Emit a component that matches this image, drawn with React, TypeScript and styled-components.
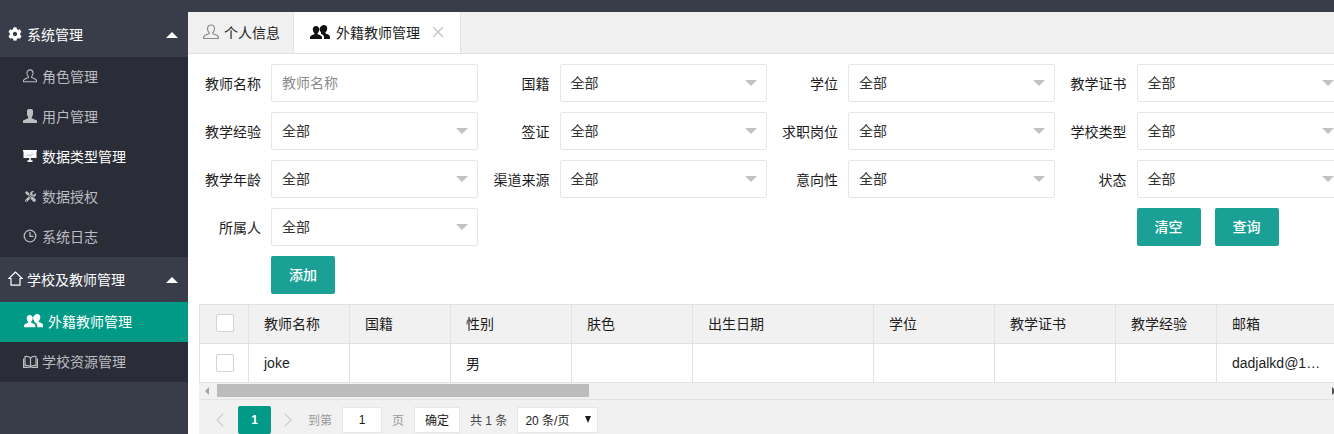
import React from "react";
import styled, { createGlobalStyle } from "styled-components";
import { FaCog, FaTools } from "react-icons/fa";
import { FiChevronLeft, FiChevronRight, FiX } from "react-icons/fi";

const GlobalStyle = createGlobalStyle`
  html, body {
    margin: 0;
    height: 100%;
    overflow: hidden;
    background: #fff;
  }
  body {
    font-family: "Liberation Sans", "Noto Sans CJK SC", sans-serif;
    font-size: 14px;
    color: #1c1c1c;
  }
`;

const Page = styled.div`
  display: flex;
  flex-direction: column;
  width: 1334px;
  height: 434px;
  overflow: hidden;
`;

const TopBar = styled.div`
  flex: 0 0 12px;
  background: #393d49;
`;

const Body = styled.div`
  display: flex;
  flex: 1;
  min-height: 0;
`;

const Sidebar = styled.nav`
  flex: 0 0 188px;
  background: #393d49;
`;

const GroupHead = styled.div`
  box-sizing: border-box;
  display: flex;
  align-items: center;
  height: 45px;
  padding: 0 10px 2px 8px;
  color: #fff;
`;

const GroupIcon = styled.span`
  display: flex;
  flex: 0 0 19px;
`;

const GroupTitle = styled.span`
  flex: 1;
`;

const Caret = styled.i`
  width: 0;
  height: 0;
  margin-top: 2px;
  border-left: 6px solid transparent;
  border-right: 6px solid transparent;
  border-bottom: 6px solid #fff;
`;

const SubList = styled.div`
  background: #2a2c37;
`;

const SubItem = styled.div<{ $active?: boolean; $bright?: boolean }>`
  box-sizing: border-box;
  display: flex;
  align-items: center;
  height: 40px;
  padding: 0 0 2px ${(p) => (p.$active ? "24px" : "23px")};
  background: ${(p) => (p.$active ? "#009a86" : "transparent")};
  color: ${(p) => (p.$active || p.$bright ? "#fff" : "#bcbdc1")};
`;

const ItemIcon = styled.span<{ $wide?: boolean }>`
  display: flex;
  flex: 0 0 ${(p) => (p.$wide ? "24px" : "19px")};
`;

const ToolsIcon = styled(FaTools)`
  margin-left: 2px;
`;

const Main = styled.main`
  flex: 1;
  min-width: 0;
`;

const TabBar = styled.div`
  display: flex;
  height: 41px;
  background: #f1f1f1;
  border-bottom: 1px solid #e2e2e2;
`;

const Tab = styled.div<{ $active?: boolean }>`
  box-sizing: border-box;
  display: flex;
  align-items: center;
  height: 41px;
  gap: ${(p) => (p.$active ? "6px" : "5px")};
  padding: ${(p) => (p.$active ? "0 13px 2px 16px" : "0 13px 2px 15px")};
  background: ${(p) => (p.$active ? "#fff" : "transparent")};
  border-right: 1px solid #e2e2e2;
  color: #1c1c1c;
`;

const CloseMark = styled(FiX)`
  margin-left: 3px;
  color: #c8c8c8;
`;

const FilterForm = styled.div`
  display: grid;
  grid-template-columns: repeat(4, 279px);
  column-gap: 9.5px;
  row-gap: 10px;
  padding: 10px 0 0 11px;
`;

const Field = styled.div<{ $column?: number }>`
  display: flex;
  align-items: center;
  height: 38px;
  gap: 10px;
  ${(p) => (p.$column ? `grid-column: ${p.$column};` : "")}
`;

const Label = styled.label`
  flex: 0 0 62px;
  padding-bottom: 1px;
  text-align: right;
  white-space: nowrap;
  color: #1c1c1c;
`;

const Control = styled.div`
  flex: 0 0 207px;
  box-sizing: border-box;
  display: flex;
  align-items: center;
  justify-content: space-between;
  height: 38px;
  padding: 0 9px 2px 10px;
  background: #fff;
  border: 1px solid #e6e6e6;
  border-radius: 2px;
  color: #333;
`;

const Placeholder = styled.span`
  color: #8c8c8c;
`;

const SelectArrow = styled.i`
  width: 0;
  height: 0;
  margin-top: 2px;
  border-left: 6px solid transparent;
  border-right: 6px solid transparent;
  border-top: 6px solid #c2c2c2;
`;

const ButtonGroup = styled.div`
  display: flex;
  gap: 14px;
  margin-left: 72px;
`;

const Action = styled.button`
  width: 64px;
  height: 38px;
  padding: 0 0 2px;
  border: 0;
  border-radius: 2px;
  background: #1aa094;
  color: #fff;
  font: inherit;
  font-weight: 500;
`;

const AddRow = styled.div`
  padding: 10px 0 0 83px;
`;

const TableBox = styled.div`
  width: 1137px;
  margin: 10px 0 0 11px;
  background: #f1f1f1;
`;

const Grid = styled.table`
  table-layout: fixed;
  border-collapse: collapse;
  width: 1139px;
`;

const TableClip = styled.div`
  overflow: hidden;
  border-top: 1px solid #e2e2e2;
`;

const Th = styled.th`
  box-sizing: border-box;
  height: 38px;
  padding: 0 15px 2px;
  background: #f1f1f1;
  border: 1px solid #e2e2e2;
  border-top: 0;
  font-weight: 400;
  text-align: left;
  color: #1c1c1c;
`;

const Td = styled.td`
  box-sizing: border-box;
  height: 39px;
  padding: 0 15px;
  background: #fff;
  border: 1px solid #e2e2e2;
  white-space: nowrap;
  overflow: hidden;
  text-overflow: ellipsis;
  color: #1c1c1c;
`;

const CheckCell = styled.span`
  display: block;
  box-sizing: border-box;
  width: 18px;
  height: 18px;
  margin: 1px 0 0 1px;
  background: #fff;
  border: 1px solid #d2d2d2;
  border-radius: 2px;
`;

const ScrollBar = styled.div`
  display: flex;
  align-items: center;
  height: 16px;
  border-bottom: 1px solid #e2e2e2;
`;

const ScrollArrow = styled.i<{ $right?: boolean }>`
  width: 0;
  height: 0;
  margin: ${(p) => (p.$right ? "0 0 0 auto" : "0 8px 0 6px")};
  border-top: 4px solid transparent;
  border-bottom: 4px solid transparent;
  ${(p) => (p.$right ? "border-left: 4px solid #505050;" : "border-right: 4px solid #a3a3a3;")}
`;

const ScrollThumb = styled.div`
  width: 372px;
  height: 13px;
  background: #bcbcbc;
`;

const Pager = styled.div`
  box-sizing: border-box;
  display: flex;
  align-items: center;
  height: 34px;
  padding: 6px 0 0 9px;
  font-size: 12px;
  color: #999;
`;

const PageCurrent = styled.span`
  display: flex;
  align-items: center;
  justify-content: center;
  width: 33px;
  height: 28px;
  margin: 0 5px 0 6px;
  background: #009a86;
  border-radius: 2px;
  color: #fff;
  font-weight: 700;
`;

const PagerBox = styled.span<{ $width: number }>`
  box-sizing: border-box;
  display: flex;
  align-items: center;
  justify-content: center;
  width: ${(p) => p.$width}px;
  height: 26px;
  background: #fff;
  border: 1px solid #e6e6e6;
  color: #1c1c1c;
`;

const NextChevron = styled(FiChevronRight)`
  margin-right: -2px;
`;

const PagerText = styled.span<{ $dark?: boolean }>`
  margin: 0 10px;
  color: ${(p) => (p.$dark ? "#444" : "#999")};
`;

const SizeSelect = styled(PagerBox)`
  justify-content: space-between;
  padding: 0 6px 0 7px;
`;

const SizeArrow = styled.i`
  width: 0;
  height: 0;
  border-left: 3.5px solid transparent;
  border-right: 3.5px solid transparent;
  border-top: 7px solid #1c1c1c;
`;

const GroupUsers = ({ width, color }: { width: number; color: string }) => (
  <svg width={width} height={(width * 14) / 20} viewBox="0 0 20 14" fill={color}>
    <path d="M14 0c2 0 3.200 1.500 3.200 3.500 0 1.600-.7 3-1.700 3.800v1.200c2 .6 4.500 1.400 4.500 3.500v2h-6v-2c0-1.500-1.200-2.500-3-3.300V7.300c-.9-.8-1.500-2.200-1.500-3.800C10.500 1.500 12 0 14 0z" />
    <path d="M6 1C8 1 9.200 2.500 9.200 4.500c0 1.500-.6 2.900-1.600 3.700v1.100c2.200.6 4.400 1.500 4.400 3.200V14H0v-1.500C0 10.800 2.200 9.900 4.400 9.300V8.200C3.400 7.400 2.800 6 2.800 4.500 2.800 2.500 4 1 6 1z" />
  </svg>
);

const OutlineUser = ({ size, color }: { size: number; color: string }) => (
  <svg width={size} height={size} viewBox="0 0 16 16" fill="none" stroke={color} strokeWidth="1.200">
    <path d="M8 1c2.200 0 3.500 1.700 3.500 3.700 0 1.500-.6 3-1.600 3.700v1.400c1.800.6 5 1.400 5.500 3.200.2.700.1 1.500.1 1.500H.5s-.1-.8.100-1.500c.5-1.800 3.700-2.600 5.500-3.200V8.400c-1-.7-1.600-2.200-1.600-3.700C4.500 2.700 5.800 1 8 1z" />
  </svg>
);

const SolidUser = () => (
  <svg width="14" height="14" viewBox="0 0 14 14" fill="#bcbdc1">
    <path d="M4 1.500C4 .6 5 0 7 0s3 .6 3 1.500V5c0 1.300-.6 2.200-1.200 2.700v1.500L14 11.500V14H0v-2.500l5.200-2.300V7.700C4.600 7.200 4 6.300 4 5z" />
  </svg>
);

const BoardIcon = () => (
  <svg width="14" height="14" viewBox="0 0 14 14">
    <path fill="#fff" d="M0 1h14v1.500h-.5V9h-13V2.500H0z" />
    <path fill="#c9ccd6" d="M3 7l2.500-2 2 1 3-2.500-.1 1.500-2.800 2.400-2-1L3 8z" />
    <path fill="#fff" d="M6.200 9h1.600v2.200H9.500V13h-5v-1.800h1.700z" />
  </svg>
);

const ClockIcon = () => (
  <svg width="14" height="14" viewBox="0 0 14 14" fill="none" stroke="#bcbdc1" strokeWidth="1.300">
    <circle cx="7" cy="7" r="5.800" />
    <path d="M7 3v4.300h3.500" />
  </svg>
);

const HomeIcon = () => (
  <svg width="15" height="15" viewBox="0 0 15 15" fill="none" stroke="#fff" strokeWidth="1.200">
    <path d="M7.500 1L.8 7.500h2.200v6.700h9V7.500h2.200z" />
  </svg>
);

const BookIcon = () => (
  <svg width="15" height="13" viewBox="0 0 15 13" fill="none" stroke="#bcbdc1" strokeWidth="1.200">
    <path d="M7.500 3C6.500 1.800 4.500 1.300 2 1.500v9c2.500-.2 4.500.3 5.500 1.500 1-1.200 3-1.700 5.500-1.500v-9C10.500 1.300 8.500 1.800 7.500 3zM7.500 3v9" />
    <path d="M.6 3.500v8.800h5.900M14.400 3.500v8.800H8.500" />
  </svg>
);

const selects = [
  ["国籍", 2],
  ["学位", 3],
  ["教学证书", 4],
  ["教学经验", 1],
  ["签证", 2],
  ["求职岗位", 3],
  ["学校类型", 4],
  ["教学年龄", 1],
  ["渠道来源", 2],
  ["意向性", 3],
  ["状态", 4],
  ["所属人", 1],
] as const;

const columns = [
  { title: "教师名称", width: 101, value: "joke" },
  { title: "国籍", width: 101, value: "" },
  { title: "性别", width: 121, value: "男" },
  { title: "肤色", width: 121, value: "" },
  { title: "出生日期", width: 181, value: "" },
  { title: "学位", width: 121, value: "" },
  { title: "教学证书", width: 121, value: "" },
  { title: "教学经验", width: 101, value: "" },
  { title: "邮箱", width: 122, value: "dadjalkd@163.com" },
];

function App() {
  return (
    <Page>
      <GlobalStyle />
      <TopBar />
      <Body>
        <Sidebar>
          <GroupHead>
            <GroupIcon><FaCog size={14} /></GroupIcon>
            <GroupTitle>系统管理</GroupTitle>
            <Caret />
          </GroupHead>
          <SubList>
            <SubItem><ItemIcon><OutlineUser size={14} color="#bcbdc1" /></ItemIcon>角色管理</SubItem>
            <SubItem><ItemIcon><SolidUser /></ItemIcon>用户管理</SubItem>
            <SubItem $bright><ItemIcon><BoardIcon /></ItemIcon>数据类型管理</SubItem>
            <SubItem><ItemIcon><ToolsIcon size={11} /></ItemIcon>数据授权</SubItem>
            <SubItem><ItemIcon><ClockIcon /></ItemIcon>系统日志</SubItem>
          </SubList>
          <GroupHead>
            <GroupIcon><HomeIcon /></GroupIcon>
            <GroupTitle>学校及教师管理</GroupTitle>
            <Caret />
          </GroupHead>
          <SubList>
            <SubItem $active><ItemIcon $wide><GroupUsers width={19} color="#fff" /></ItemIcon>外籍教师管理</SubItem>
            <SubItem><ItemIcon><BookIcon /></ItemIcon>学校资源管理</SubItem>
          </SubList>
        </Sidebar>
        <Main>
          <TabBar>
            <Tab><OutlineUser size={16} color="#8a8a8a" />个人信息</Tab>
            <Tab $active><GroupUsers width={20} color="#111" />外籍教师管理<CloseMark size={18} /></Tab>
          </TabBar>
          <FilterForm>
            <Field>
              <Label>教师名称</Label>
              <Control><Placeholder>教师名称</Placeholder></Control>
            </Field>
            {selects.map(([label, column]) => (
              <Field key={label} $column={column}>
                <Label>{label}</Label>
                <Control>全部<SelectArrow /></Control>
              </Field>
            ))}
            <Field $column={4}>
              <ButtonGroup>
                <Action>清空</Action>
                <Action>查询</Action>
              </ButtonGroup>
            </Field>
          </FilterForm>
          <AddRow>
            <Action>添加</Action>
          </AddRow>
          <TableBox>
            <TableClip>
              <Grid>
                <colgroup>
                  <col width={49} />
                  {columns.map((c) => <col key={c.title} width={c.width} />)}
                </colgroup>
                <thead>
                  <tr>
                    <Th><CheckCell /></Th>
                    {columns.map((c) => <Th key={c.title}>{c.title}</Th>)}
                  </tr>
                </thead>
                <tbody>
                  <tr>
                    <Td><CheckCell /></Td>
                    {columns.map((c) => <Td key={c.title}>{c.value}</Td>)}
                  </tr>
                </tbody>
              </Grid>
            </TableClip>
            <ScrollBar>
              <ScrollArrow />
              <ScrollThumb />
              <ScrollArrow $right />
            </ScrollBar>
            <Pager>
              <FiChevronLeft size={24} strokeWidth={1.5} color="#d2d2d2" />
              <PageCurrent>1</PageCurrent>
              <NextChevron size={24} strokeWidth={1.5} color="#d2d2d2" />
              <PagerText>到第</PagerText>
              <PagerBox $width={40}>1</PagerBox>
              <PagerText>页</PagerText>
              <PagerBox $width={46}>确定</PagerBox>
              <PagerText $dark>共 1 条</PagerText>
              <SizeSelect $width={81}>20 条/页<SizeArrow /></SizeSelect>
            </Pager>
          </TableBox>
        </Main>
      </Body>
    </Page>
  );
}

export default App;
